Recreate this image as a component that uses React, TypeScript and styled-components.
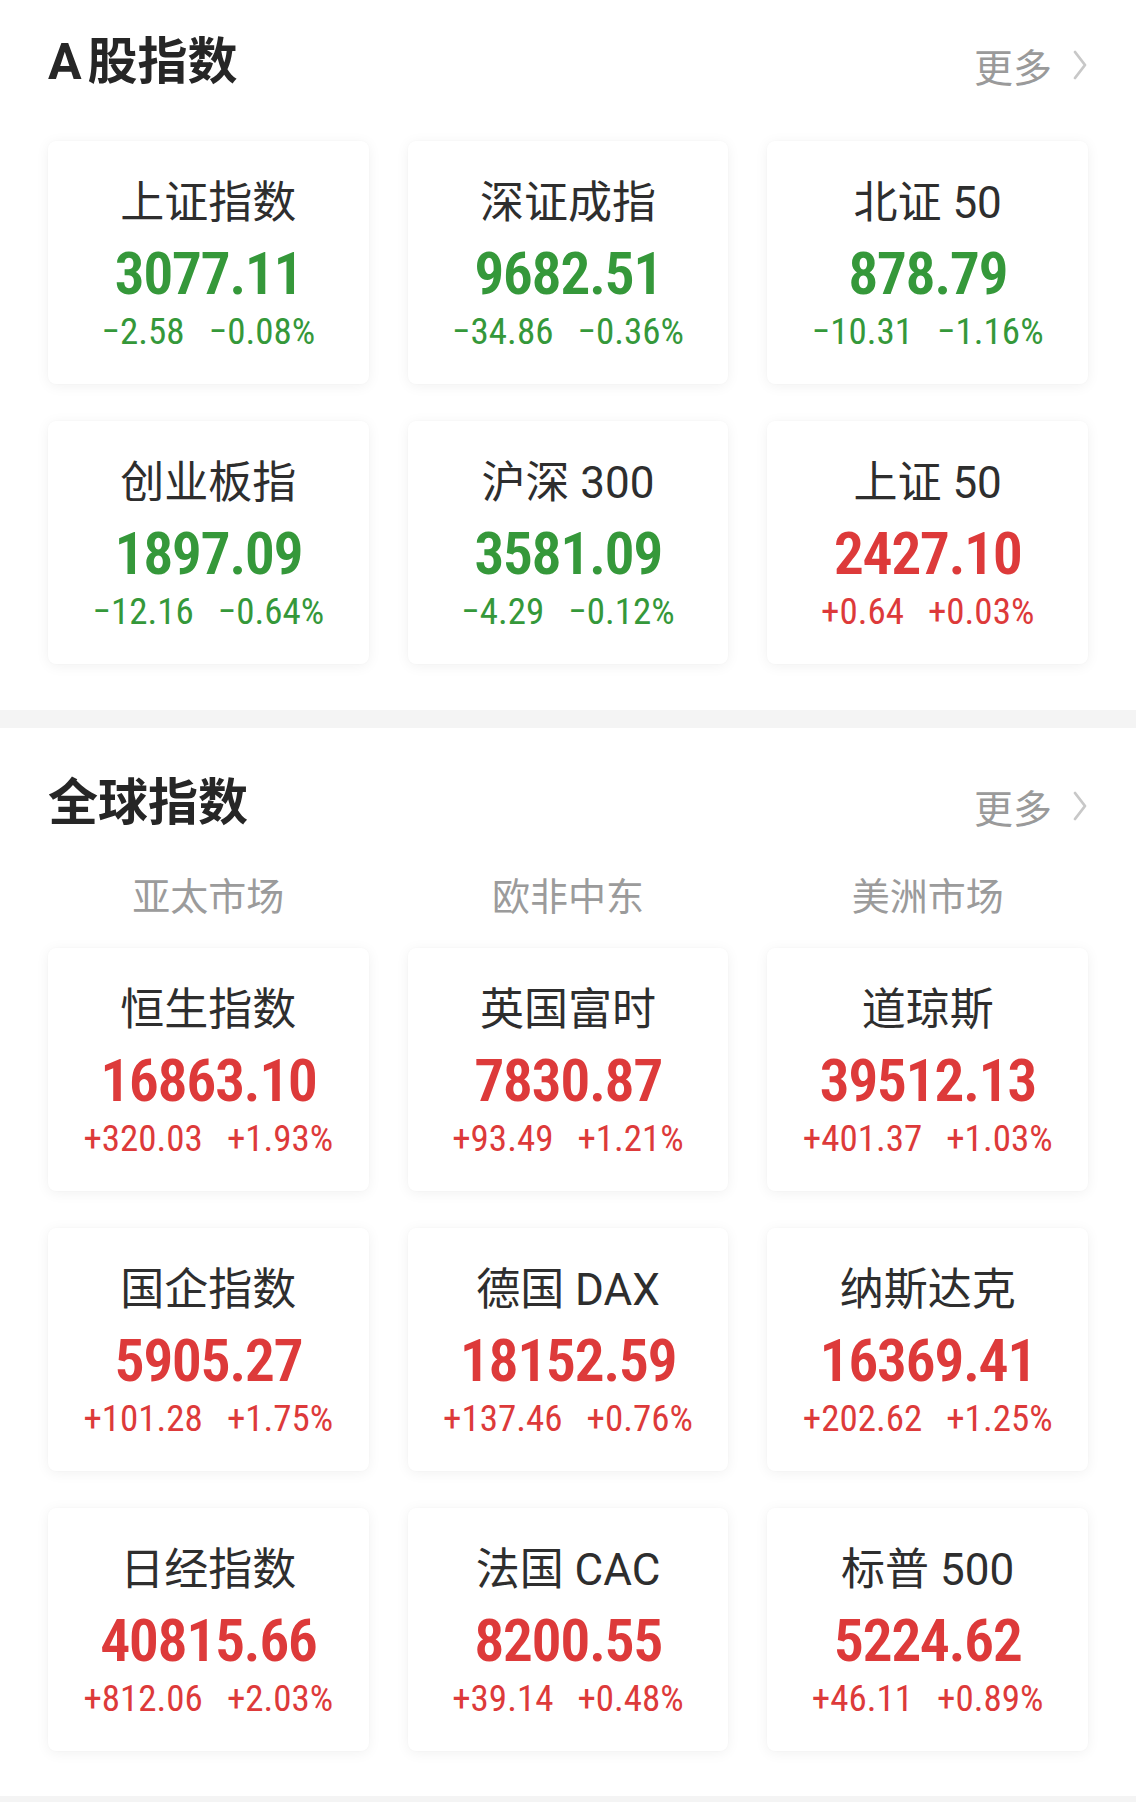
import React from "react";
import styled, { createGlobalStyle } from "styled-components";

const Global = createGlobalStyle`
  html, body { margin: 0; padding: 0; background: #ffffff; }
  body { font-family: "Roboto", "Noto Sans CJK SC", sans-serif; }
`;

const GREEN = "#35983a";
const RED = "#dd3a3a";

type Quote = { name: string; value: string; change: string; pct: string };

const aShares: Quote[] = [
  { name: "上证指数", value: "3077.11", change: "−2.58", pct: "−0.08%" },
  { name: "深证成指", value: "9682.51", change: "−34.86", pct: "−0.36%" },
  { name: "北证 50", value: "878.79", change: "−10.31", pct: "−1.16%" },
  { name: "创业板指", value: "1897.09", change: "−12.16", pct: "−0.64%" },
  { name: "沪深 300", value: "3581.09", change: "−4.29", pct: "−0.12%" },
  { name: "上证 50", value: "2427.10", change: "+0.64", pct: "+0.03%" },
];

const globals: Quote[] = [
  { name: "恒生指数", value: "16863.10", change: "+320.03", pct: "+1.93%" },
  { name: "英国富时", value: "7830.87", change: "+93.49", pct: "+1.21%" },
  { name: "道琼斯", value: "39512.13", change: "+401.37", pct: "+1.03%" },
  { name: "国企指数", value: "5905.27", change: "+101.28", pct: "+1.75%" },
  { name: "德国 DAX", value: "18152.59", change: "+137.46", pct: "+0.76%" },
  { name: "纳斯达克", value: "16369.41", change: "+202.62", pct: "+1.25%" },
  { name: "日经指数", value: "40815.66", change: "+812.06", pct: "+2.03%" },
  { name: "法国 CAC", value: "8200.55", change: "+39.14", pct: "+0.48%" },
  { name: "标普 500", value: "5224.62", change: "+46.11", pct: "+0.89%" },
];

const Page = styled.div`
  width: 1136px;
  min-height: 1802px;
  background: #fff;
  display: flex;
  flex-direction: column;
`;

const Section = styled.section<{ $top: number; $bottom: number }>`
  padding: ${(p) => p.$top}px 48px ${(p) => p.$bottom}px;
  background: #fff;
`;

const Band = styled.div`
  height: 18px;
  background: #f4f4f4;
`;

const Header = styled.div`
  display: flex;
  align-items: center;
  justify-content: space-between;
  height: 50px;
`;

const Title = styled.h2`
  margin: 0;
  font-family: "Roboto", "Noto Sans CJK SC", sans-serif;
  font-weight: 700;
  font-size: 50px;
  line-height: 50px;
  color: #262626;
`;

const TitleLatin = styled.span`
  margin-right: 6px;
`;

const More = styled.div`
  display: flex;
  align-items: center;
  gap: 20px;
  font-family: "Noto Sans CJK SC", sans-serif;
  font-size: 39px;
  line-height: 40px;
  color: #9a9a9a;
  margin-top: 6px;
`;

const Tabs = styled.div`
  display: grid;
  grid-template-columns: repeat(3, 1fr);
  column-gap: 39px;
  margin-top: 47px;
  margin-bottom: 35px;
`;

const Tab = styled.div`
  text-align: center;
  font-family: "Noto Sans CJK SC", sans-serif;
  font-size: 38px;
  line-height: 38px;
  color: #9b9b9b;
`;

const Grid = styled.div<{ $top: number }>`
  display: grid;
  grid-template-columns: repeat(3, 1fr);
  column-gap: 39px;
  row-gap: 37px;
  margin-top: ${(p) => p.$top}px;
`;

const Card = styled.div`
  height: 243px;
  background: #fff;
  border-radius: 8px;
  box-shadow: 0 2px 14px rgba(0, 0, 0, 0.06), 0 0 2px rgba(0, 0, 0, 0.03);
  display: flex;
  flex-direction: column;
  align-items: center;
  box-sizing: border-box;
  padding-top: 40px;
`;

const Name = styled.div`
  font-family: "Roboto", "Noto Sans CJK SC", sans-serif;
  font-size: 44px;
  line-height: 44px;
  color: #2e2e2e;
  white-space: nowrap;
`;

const NumFont = `"Liberation Sans Narrow", "Roboto Condensed", "DejaVu Sans Condensed", "Roboto", sans-serif`;

const Value = styled.div<{ $color: string }>`
  margin-top: 18px;
  font-family: ${NumFont};
  font-weight: 600;
  font-size: 60px;
  line-height: 62px;
  letter-spacing: -1.5px;
  color: ${(p) => p.$color};
  white-space: nowrap;
`;

const Changes = styled.div<{ $color: string }>`
  margin-top: 8px;
  display: flex;
  gap: 24px;
  font-family: ${NumFont};
  font-size: 37px;
  line-height: 38px;
  color: ${(p) => p.$color};
  white-space: nowrap;
`;

const Chevron = () => (
  <svg width="16" height="32" viewBox="0 0 16 32" fill="none">
    <path d="M3 3 L13 16 L3 29" stroke="#c8c8c8" strokeWidth="2.8" strokeLinecap="round" strokeLinejoin="round" />
  </svg>
);

const QuoteCard = ({ q }: { q: Quote }) => {
  const color = q.change.startsWith("+") ? RED : GREEN;
  return (
    <Card>
      <Name>{q.name}</Name>
      <Value $color={color}>{q.value}</Value>
      <Changes $color={color}>
        <span>{q.change}</span>
        <span>{q.pct}</span>
      </Changes>
    </Card>
  );
};

const MoreLink = () => (
  <More>
    <span>更多</span>
    <Chevron />
  </More>
);

export default function App() {
  return (
    <Page>
      <Global />
      <Section $top={37} $bottom={46}>
        <Header>
          <Title>
            <TitleLatin>A</TitleLatin>股指数
          </Title>
          <MoreLink />
        </Header>
        <Grid $top={54}>
          {aShares.map((q) => (
            <QuoteCard key={q.name} q={q} />
          ))}
        </Grid>
      </Section>
      <Band />
      <Section $top={50} $bottom={45}>
        <Header>
          <Title>全球指数</Title>
          <MoreLink />
        </Header>
        <Tabs>
          <Tab>亚太市场</Tab>
          <Tab>欧非中东</Tab>
          <Tab>美洲市场</Tab>
        </Tabs>
        <Grid $top={0}>
          {globals.map((q) => (
            <QuoteCard key={q.name} q={q} />
          ))}
        </Grid>
      </Section>
      <Band />
    </Page>
  );
}
